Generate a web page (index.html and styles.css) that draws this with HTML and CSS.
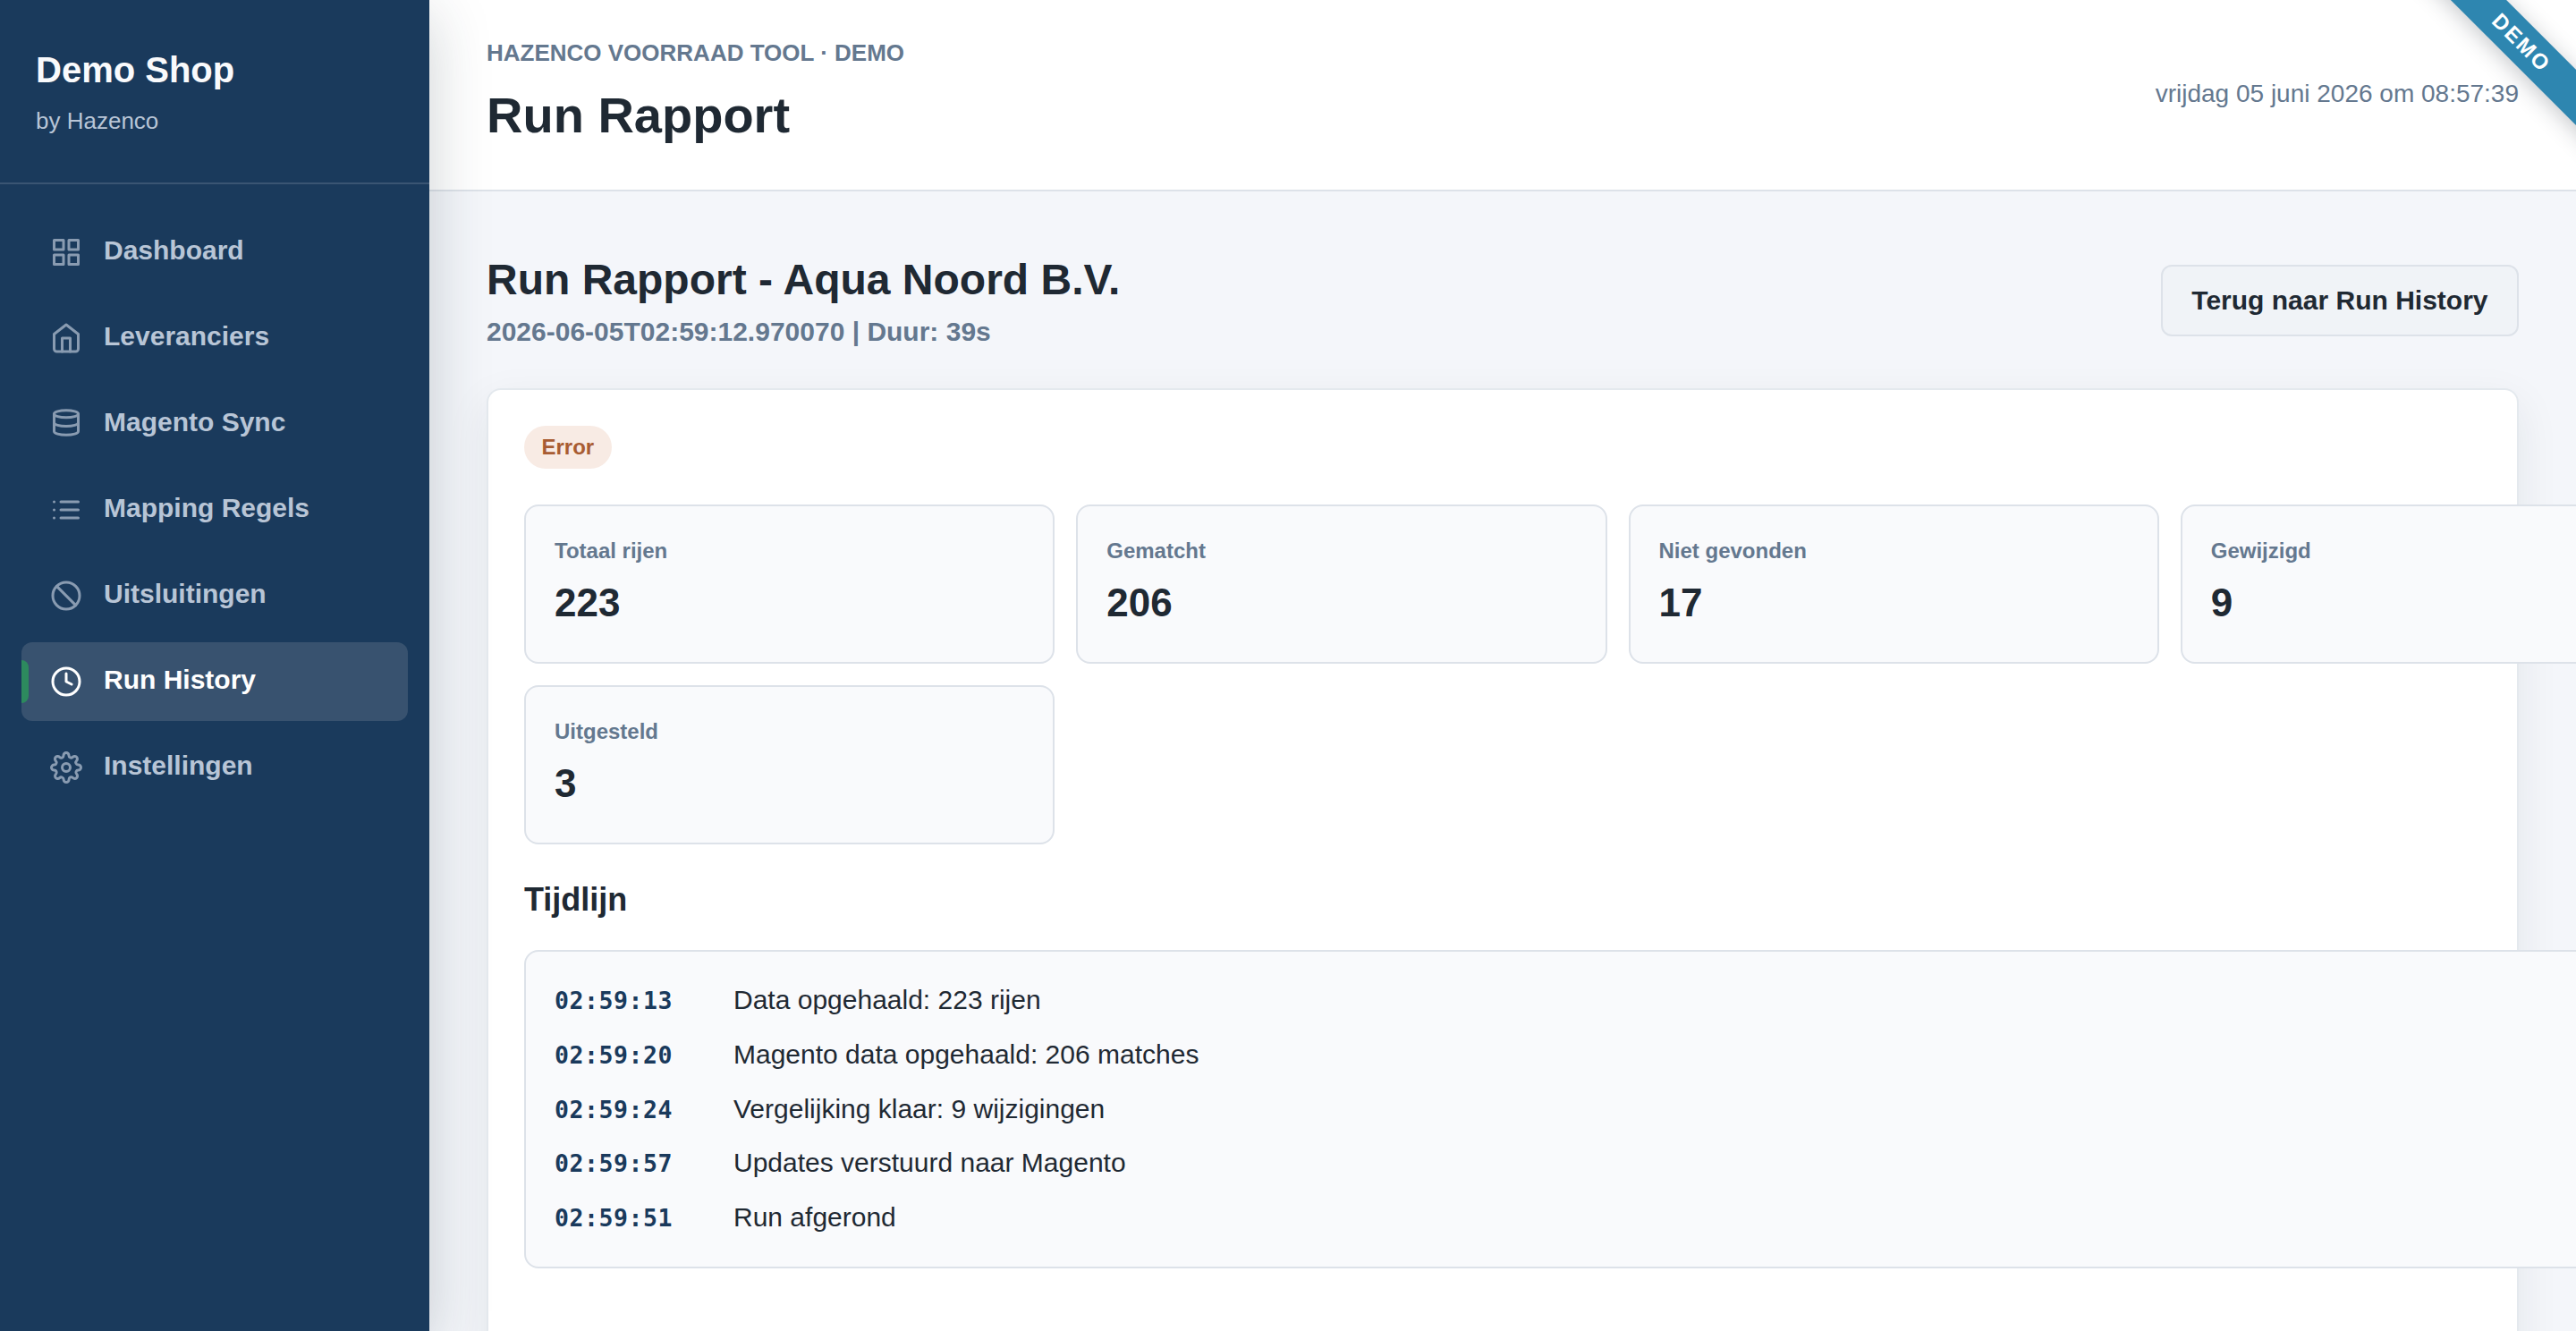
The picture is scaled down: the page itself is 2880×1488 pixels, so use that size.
FILE: index.html
```
<!DOCTYPE html>
<html lang="nl">
<head>
    <meta charset="UTF-8">
    <meta name="viewport" content="width=device-width, initial-scale=1.0">
    <title>Run Rapport - Demo Shop</title>
    <link rel="stylesheet" href="styles.css">
</head>
<body>
    <div class="demo-ribbon"><span>DEMO</span></div>
    <div class="app">
        <aside class="sidebar">
            <div class="brand">
                <div class="brand-name">Demo Shop</div>
                <div class="brand-sub">by Hazenco</div>
            </div>
            <nav class="nav">
                <a href="/" class="nav-item">
                    <svg viewBox="0 0 24 24"><rect x="3" y="3" width="7" height="7"/><rect x="14" y="3" width="7" height="7"/><rect x="3" y="14" width="7" height="7"/><rect x="14" y="14" width="7" height="7"/></svg>
                    <span>Dashboard</span>
                </a>
                <a href="/leveranciers" class="nav-item">
                    <svg viewBox="0 0 24 24"><path d="M3 9l9-7 9 7v11a2 2 0 0 1-2 2H5a2 2 0 0 1-2-2z"/><polyline points="9 22 9 12 15 12 15 22"/></svg>
                    <span>Leveranciers</span>
                </a>
                <a href="/magento" class="nav-item">
                    <svg viewBox="0 0 24 24"><ellipse cx="12" cy="4.5" rx="9" ry="2.7"/><path d="M3 4.5v13c0 1.5 4 2.7 9 2.7s9-1.2 9-2.7v-13"/><path d="M3 11c0 1.5 4 2.7 9 2.7s9-1.2 9-2.7"/></svg>
                    <span>Magento Sync</span>
                </a>
                <a href="/mapping" class="nav-item">
                    <svg viewBox="0 0 24 24"><path d="M8 6h13M8 12h13M8 18h13M3 6h.01M3 12h.01M3 18h.01"/></svg>
                    <span>Mapping Regels</span>
                </a>
                <a href="/uitsluitingen" class="nav-item">
                    <svg viewBox="0 0 24 24"><circle cx="12" cy="12" r="10"/><path d="M4.93 4.93l14.14 14.14"/></svg>
                    <span>Uitsluitingen</span>
                </a>
                <a href="/runs" class="nav-item active">
                    <svg viewBox="0 0 24 24"><circle cx="12" cy="12" r="10"/><polyline points="12 6 12 12 16 14"/></svg>
                    <span>Run History</span>
                </a>
                <a href="/instellingen" class="nav-item">
                    <svg viewBox="0 0 24 24"><circle cx="12" cy="12" r="3"/><path d="M19.4 15a1.65 1.65 0 0 0 .33 1.82l.06.06a2 2 0 1 1-2.83 2.83l-.06-.06a1.65 1.65 0 0 0-1.82-.33 1.65 1.65 0 0 0-1 1.51V21a2 2 0 0 1-4 0v-.09A1.65 1.65 0 0 0 9 19.4a1.65 1.65 0 0 0-1.82.33l-.06.06a2 2 0 1 1-2.83-2.83l.06-.06a1.65 1.65 0 0 0 .33-1.82 1.65 1.65 0 0 0-1.51-1H3a2 2 0 0 1 0-4h.09A1.65 1.65 0 0 0 4.6 9a1.65 1.65 0 0 0-.33-1.82l-.06-.06a2 2 0 1 1 2.83-2.83l.06.06a1.65 1.65 0 0 0 1.82.33H9a1.65 1.65 0 0 0 1-1.51V3a2 2 0 0 1 4 0v.09a1.65 1.65 0 0 0 1 1.51 1.65 1.65 0 0 0 1.82-.33l.06-.06a2 2 0 1 1 2.83 2.83l-.06.06a1.65 1.65 0 0 0-.33 1.82V9a1.65 1.65 0 0 0 1.51 1H21a2 2 0 0 1 0 4h-.09a1.65 1.65 0 0 0-1.51 1z"/></svg>
                    <span>Instellingen</span>
                </a>
            </nav>
        </aside>
        <main class="main">
            <header class="topbar">
                <div>
                    <div class="eyebrow">HAZENCO VOORRAAD TOOL · DEMO</div>
                    <h1>Run Rapport</h1>
                </div>
                <div class="clock">vrijdag 05 juni 2026 om 08:57:39</div>
            </header>
            <section class="content">
                <div class="page-head">
                    <div>
                        <h2>Run Rapport - Aqua Noord B.V.</h2>
                        <p class="run-meta">2026-06-05T02:59:12.970070 | Duur: 39s</p>
                    </div>
                    <a href="/runs" class="btn">Terug naar Run History</a>
                </div>
                <div class="card">
                    <div class="report">
                        <span class="badge badge-error">Error</span>
                        <div class="stats">
                            <div class="stat"><div class="stat-label">Totaal rijen</div><div class="stat-value">223</div></div>
                            <div class="stat"><div class="stat-label">Gematcht</div><div class="stat-value">206</div></div>
                            <div class="stat"><div class="stat-label">Niet gevonden</div><div class="stat-value">17</div></div>
                            <div class="stat"><div class="stat-label">Gewijzigd</div><div class="stat-value">9</div></div>
                            <div class="stat"><div class="stat-label">Uitgesteld</div><div class="stat-value">3</div></div>
                        </div>
                        <h3>Tijdlijn</h3>
                        <div class="timeline">
                            <div class="timeline-row"><time>02:59:13</time><span>Data opgehaald: 223 rijen</span></div>
                            <div class="timeline-row"><time>02:59:20</time><span>Magento data opgehaald: 206 matches</span></div>
                            <div class="timeline-row"><time>02:59:24</time><span>Vergelijking klaar: 9 wijzigingen</span></div>
                            <div class="timeline-row"><time>02:59:57</time><span>Updates verstuurd naar Magento</span></div>
                            <div class="timeline-row"><time>02:59:51</time><span>Run afgerond</span></div>
                        </div>
                    </div>
                </div>
            </section>
        </main>
    </div>
</body>
</html>
```
FILE: styles.css
```
* {
    margin: 0;
    padding: 0;
    box-sizing: border-box;
}
body {
    font-family: Arial, 'Liberation Sans', sans-serif;
    font-size: 30px;
    background: #f4f6fa;
    color: #1f2933;
    height: 100vh;
    overflow: hidden;
}
.app {
    display: flex;
    height: 100vh;
    overflow: hidden;
}

/* Sidebar */
.sidebar {
    position: relative;
    z-index: 2;
    flex: 0 0 480px;
    background: #1a3a5c;
    box-shadow: 0 16px 64px rgba(31, 51, 61, 0.22);
}
.brand {
    height: 206px;
    padding: 54px 40px 0;
    border-bottom: 2px solid rgba(255, 255, 255, 0.14);
}
.brand-name {
    font-size: 40px;
    line-height: 48px;
    font-weight: bold;
    color: #f9fafc;
}
.brand-sub {
    margin-top: 13px;
    font-size: 26px;
    line-height: 40px;
    color: #b8c5d6;
}
.nav {
    display: flex;
    flex-direction: column;
    gap: 8px;
    padding: 32px 24px;
}
.nav-item {
    position: relative;
    display: flex;
    align-items: center;
    gap: 24px;
    height: 88px;
    padding: 0 32px;
    border-radius: 12px;
    overflow: hidden;
    color: #b8c5d6;
    font-weight: bold;
    text-decoration: none;
}
.nav-item span {
    padding-bottom: 5px;
}
.nav-item svg {
    width: 36px;
    height: 36px;
    fill: none;
    stroke: currentColor;
    stroke-width: 2;
    stroke-linecap: round;
    stroke-linejoin: round;
    opacity: 0.7;
    overflow: visible;
}
.nav-item.active {
    background: #38526f;
    color: #fff;
}
.nav-item.active svg {
    opacity: 1;
}
.nav-item.active::before {
    content: '';
    position: absolute;
    left: 0;
    top: 20px;
    bottom: 20px;
    width: 8px;
    border-radius: 0 8px 8px 0;
    background: #2d8a5e;
}

/* Main */
.main {
    flex: 1;
    min-width: 0;
}
.topbar {
    display: flex;
    justify-content: space-between;
    align-items: center;
    height: 214px;
    padding: 0 64px 10px;
    background: #fff;
    border-bottom: 2px solid #dde2e9;
}
.eyebrow {
    font-size: 26px;
    line-height: 40px;
    font-weight: bold;
    color: #64788f;
}
h1 {
    margin-top: 16px;
    font-size: 56px;
    line-height: 68px;
}
.clock {
    padding-top: 8px;
    font-size: 28px;
    color: #64788f;
}
.content {
    padding: 64px;
}
.page-head {
    display: flex;
    justify-content: space-between;
    align-items: center;
    height: 116px;
    margin-bottom: 40px;
}
.page-head > div {
    padding-top: 6px;
}
h2 {
    font-size: 48px;
    line-height: 60px;
}
.run-meta {
    margin-top: 4px;
    font-weight: bold;
    line-height: 48px;
    color: #64788f;
}
.btn {
    height: 80px;
    line-height: 76px;
    padding: 0 32.5px;
    border: 2px solid #dde2e9;
    border-radius: 12px;
    background: #f0f3f7;
    color: #1f2933;
    font-weight: bold;
    text-decoration: none;
}
.card {
    height: 1200px;
    padding: 40px;
    background: #fff;
    border: 2px solid #e4e9ee;
    border-radius: 16px;
    box-shadow: 0 16px 48px rgba(31, 41, 51, 0.08);
}
/* wider than the card, runs off the right edge */
.report {
    width: 2445px;
}
.badge {
    display: block;
    width: fit-content;
    padding: 0 19.5px;
    border-radius: 24px;
    font-size: 24px;
    line-height: 48px;
    font-weight: bold;
}
.badge-error {
    background: #f8ebe4;
    color: #a85c32;
}
.stats {
    display: grid;
    grid-template-columns: repeat(4, 1fr);
    gap: 24px;
    margin-top: 40px;
}
.stat {
    height: 178px;
    padding: 32px;
    background: #f9fafc;
    border: 2px solid #dde2e9;
    border-radius: 16px;
}
.stat-label {
    font-size: 24px;
    line-height: 36px;
    font-weight: bold;
    color: #64788f;
}
.stat-value {
    margin-top: 10px;
    font-size: 44px;
    line-height: 60px;
    font-weight: bold;
}
h3 {
    margin: 39px 0 33px;
    font-size: 36px;
    line-height: 46px;
}
.timeline {
    padding: 24px 32px;
    background: #f9fafc;
    border: 2px solid #dde2e9;
    border-radius: 16px;
}
.timeline-row {
    display: flex;
    align-items: baseline;
    height: 60.8px;
    line-height: 60px;
}
.timeline-row time {
    width: 200px;
    font-family: Consolas, 'DejaVu Sans Mono', monospace;
    font-size: 26.5px;
    letter-spacing: 0.55px;
    font-weight: bold;
    color: #1a3a5c;
}

/* Corner ribbon */
.demo-ribbon {
    position: absolute;
    z-index: 3;
    top: 26px;
    right: -89px;
    width: 300px;
    height: 44px;
    line-height: 44px;
    text-align: center;
    font-size: 24px;
    font-weight: bold;
    letter-spacing: 2.4px;
    color: #fff;
    background: #2e86b0;
    box-shadow: 0 4px 24px rgba(31, 41, 51, 0.25);
    transform: rotate(45deg);
}
```
